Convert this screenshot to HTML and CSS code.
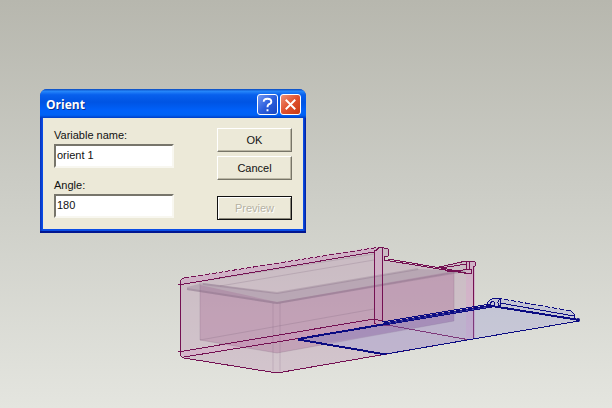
FILE: index.html
```html
<!DOCTYPE html>
<html lang="en">
<head>
<meta charset="utf-8">
<title>Orient</title>
<link rel="stylesheet" href="styles.css">
</head>
<body>
<main class="viewport">
  <svg class="model" viewBox="0 0 612 408" preserveAspectRatio="xMinYMin meet" role="img" aria-label="Box model with sliding lid">
    <!-- outer case -->
    <path class="case" d="M181 283Q181 279 185 278L380 247L388 249V256L384 257V260L435 268L466 261L475 262V338L400 352L277 373L184 358Q181 357 181 353Z"/>
    <path class="tint" d="M181 284L374 252V247L184 278ZM374 250H382V322H374ZM466 262H475V338H466ZM181 352L374 319L382 325L184 357Z"/>
    <!-- inner tray -->
    <path class="tray" d="M200 285L277 302L454 271V321L277 353L200 340Z"/>
    <path class="rim" d="M187 287L203 283L277 293L418 269L465 271L277 304L187 290Z"/>
    <path class="seam" d="M187 289L277 303L465 271M203 284L277 293L418 269"/>
    <path class="seam faint" d="M203 281L374 254M220 286L374 260M200 282V340L277 353L454 321V272M273 303V371M280 303V371M200 340L374 309"/>
    <!-- case edges -->
    <path class="edge dashed" d="M184 278L380 247"/>
    <path class="edge" d="M184 278Q180 279 180 284V353Q180 357 184 358L277 373L473 339M178 285L374 252M178 352L374 319L382 321M184 357L382 325M374 250V321M382 248V322M374 252L380 247L388 249V256H384V260L470 274M374 319V323L380 326L387 325M388 259L447 269L471 274V269L447 272M435 268L466 261L475 262V266H473V339M466 261V269M469 261V269M441 268L467 264M387 325L470 340"/>
    <!-- lid -->
    <path class="lid" d="M298 339L386 324L492 307L579 320L473 339L386 354Z"/>
    <path class="shade" d="M298 339L382 325L454 313V321L357 338L325 343Z"/>
    <path class="lid" d="M487 305Q488 299 497 298L571 311Q574 313 574 319L500 307Z"/>
    <path class="navy strong" d="M298 339L386 324L492 306L579 320"/>
    <path class="navy" d="M298 339L386 354L473 339L579 321M298 340L386 355M382 322L490 304"/>
    <path class="navy heavy" d="M384 324L492 306"/>
    <path class="texture" d="M389 323L487 307"/>
    <path class="navy" d="M488 306Q486 299 497 298L500 299Q496 302 500 307M490 305Q490 301 494 302V306M500 299V307M574 319V314L571 311M500 303L574 316"/>
    <path class="navy dashed" d="M497 298L571 311"/>
    <circle class="knob" cx="578" cy="320" r="2"/>
  </svg>

  <form class="dialog" role="dialog" aria-labelledby="dialog-title">
    <header class="titlebar">
      <h1 class="title" id="dialog-title">Orient</h1>
      <button class="caption help" type="button" aria-label="Help">
        <svg class="glyph" viewBox="0 0 20 20"><path d="M6 7Q6 4 10 4Q14 4 14 7Q14 9 11 10Q10 11 10 13M10 15V17"/></svg>
      </button>
      <button class="caption close" type="button" aria-label="Close">
        <svg class="glyph" viewBox="0 0 20 20"><path d="M5 5L15 15M15 5L5 15"/></svg>
      </button>
    </header>
    <div class="content">
      <div class="fields">
        <label class="label" for="variable">Variable name:</label>
        <input class="field" id="variable" type="text" value="orient 1">
        <label class="label" for="angle">Angle:</label>
        <input class="field" id="angle" type="text" value="180">
      </div>
      <div class="actions">
        <button class="push" type="button">OK</button>
        <button class="push" type="button">Cancel</button>
        <button class="push preview" type="button" disabled>Preview</button>
      </div>
    </div>
  </form>
</main>
</body>
</html>
```
FILE: styles.css
```css
* {
  box-sizing: border-box;
}

body {
  margin: 0;
  font: 11px/14px "Liberation Sans", Arial, sans-serif;
  color: #111;
}

.viewport {
  position: relative;
  min-height: 100vh;
  overflow: hidden;
  background: linear-gradient(#b7b7ae, #cbccc5 45%, #e4e5df);
}

.model {
  display: block;
  width: 100%;
}

.model path {
  stroke-linejoin: round;
}

.case { fill: rgba(183, 137, 174, 0.32); }
.tint { fill: rgba(222, 150, 205, 0.28); }
.tray { fill: rgba(166, 98, 147, 0.33); }
.rim { fill: rgba(150, 125, 150, 0.35); }

.seam {
  fill: none;
  stroke: rgba(110, 80, 110, 0.22);
  stroke-width: 2;
}

.faint {
  stroke: rgba(110, 85, 110, 0.2);
  stroke-width: 1;
}

.edge {
  fill: none;
  stroke: #741052;
  stroke-width: 1;
  shape-rendering: crispEdges;
}

.dashed { stroke-dasharray: 5 2; }
.lid { fill: rgba(150, 150, 215, 0.3); }
.shade { fill: rgba(105, 75, 155, 0.18); }

.navy {
  fill: none;
  stroke: #0b0b82;
  stroke-width: 1;
  shape-rendering: crispEdges;
}

.strong { stroke-width: 2; }
.heavy { stroke-width: 3; }

.texture {
  stroke: #6565bd;
  stroke-width: 1;
  stroke-dasharray: 2 4;
}

.knob { fill: #0b0b82; }

.dialog {
  position: absolute;
  top: 89px;
  left: 40px;
  width: 266px;
  padding: 0 3px 2px;
  background: linear-gradient(90deg, #0831b8, #0b4ee6 1%, #0b4ee6 99%, #001d9c);
  border-bottom: 2px solid #001590;
  border-radius: 7px 7px 0 0;
  overflow: hidden;
}

.titlebar {
  display: flex;
  align-items: center;
  gap: 2px;
  height: 29px;
  margin: 0 -3px;
  padding: 2px 5px 0 6px;
  background: linear-gradient(#0a49bd, #2586fa 8%, #0860ed 20%, #0054e3 45%, #0061fa 75%, #0062f5 90%, #003dc5);
}

.title {
  flex: 1;
  margin: 0;
  font: bold 12px/18px "Open Sans", sans-serif;
  color: #fff;
  text-shadow: 1px 1px #08318f;
}

.caption {
  width: 21px;
  height: 21px;
  padding: 0;
  border: 1px solid #fff;
  border-radius: 3px;
}

.help { background: linear-gradient(135deg, #7298f3, #2c5fdd 50%, #1847c0); }
.close { background: linear-gradient(135deg, #ee9278, #e0502d 50%, #c73a13); }

.glyph {
  display: block;
  width: 100%;
  fill: none;
  stroke: #fff;
  stroke-width: 2;
}

.content {
  display: flex;
  justify-content: space-between;
  padding: 10px 11px 9px;
  background: #ece9d8;
}

.fields {
  display: flex;
  flex-direction: column;
  width: 120px;
}

.label {
  height: 16px;
}

.field {
  width: 100%;
  height: 24px;
  margin-bottom: 10px;
  padding: 0 1px 3px;
  border: 2px solid;
  border-color: #77756b #f8f7f0 #f8f7f0 #77756b;
  background: #fff;
  font: inherit;
  color: inherit;
}

.field:last-child {
  margin-bottom: 0;
}

.actions {
  display: flex;
  flex-direction: column;
  gap: 4px;
  width: 75px;
}

.push {
  height: 24px;
  padding: 0;
  border: 1px solid;
  border-color: #fff #777568 #777568 #fff;
  box-shadow: inset -1px -1px #bbb7a5;
  background: #ece9d8;
  font: inherit;
  color: inherit;
}

.preview {
  margin-top: 12px;
  border-color: #111;
  box-shadow: inset 1px 1px #fff, inset -1px -1px #8b887a;
  color: #b5b2a3;
  text-shadow: 1px 1px #fff;
}
```
